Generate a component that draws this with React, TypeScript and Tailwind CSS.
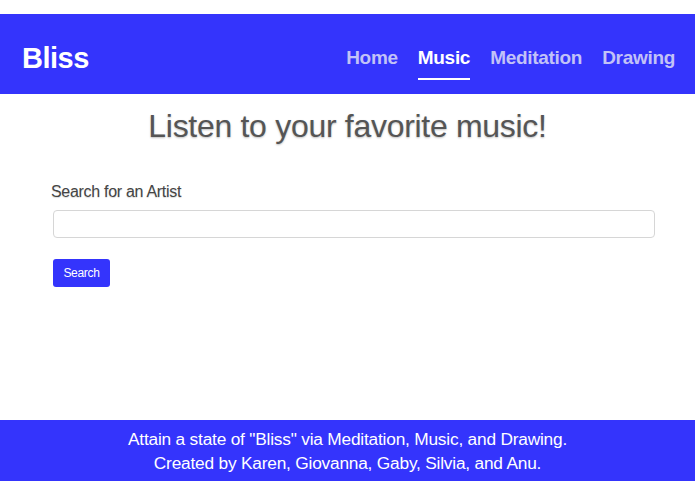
import { useState } from "react";

// ── Nav links ─────────────────────────────────────────────────────────────────

const LINKS = ["Home", "Music", "Meditation", "Drawing"];

export default function App() {
  const [query, setQuery] = useState("");
  const active = "Music";

  return (
    <div
      className="min-h-[494px] bg-white flex flex-col pt-[14px]"
      style={{ fontFamily: '"Liberation Sans", Arial, sans-serif' }}
    >
      {/* Navbar */}
      <nav className="h-[80px] bg-[#3434fc] flex items-center justify-between pl-[22px] pr-[20px] pt-[9px]">
        <span className="text-white font-bold text-[29px] tracking-[-0.5px]">Bliss</span>
        <ul className="flex items-center gap-[20px]">
          {LINKS.map(l => (
            <li key={l} className="relative">
              <a
                href="#"
                className={
                  l === active
                    ? "text-white font-bold text-[19px] tracking-[-0.3px]"
                    : "text-[#c2c2f7] font-bold text-[19px] tracking-[-0.3px]"
                }
              >
                {l}
              </a>
              {l === active && (
                <span className="absolute left-0 right-0 top-[34px] h-[2px] bg-white" />
              )}
            </li>
          ))}
        </ul>
      </nav>

      {/* Main */}
      <main className="flex-1 flex flex-col px-[51px]">
        <h1
          className="text-center text-[32px] text-[#555] mt-[14px] leading-[36px] tracking-[-0.3px]"
          style={{ textShadow: "0 1px 2px rgba(0,0,0,0.25)" }}
        >
          Listen to your favorite music!
        </h1>
        <label
          className="mt-[39px] text-[16px] leading-[18px] text-[#444] tracking-[-0.3px]"
          style={{ textShadow: "0 1px 1px rgba(0,0,0,0.15)" }}
        >
          Search for an Artist
        </label>
        <input
          value={query}
          onChange={e => setQuery(e.target.value)}
          className="mt-[9px] ml-[2px] w-[602px] h-[28px] border border-[#d6d6d6] rounded-[4px] px-2 text-sm outline-none"
        />
        <button className="mt-[21px] ml-[2px] w-[57px] h-[28px] bg-[#3434fc] text-white text-[12px] rounded-[3px] tracking-[-0.3px]">
          Search
        </button>
      </main>

      {/* Footer */}
      <footer className="h-[61px] bg-[#3434fc] flex flex-col items-center justify-center text-white text-[17.3px] leading-[24px] tracking-[-0.2px] mb-[13px]">
        <p>Attain a state of "Bliss" via Meditation, Music, and Drawing.</p>
        <p>Created by Karen, Giovanna, Gaby, Silvia, and Anu.</p>
      </footer>
    </div>
  );
}
